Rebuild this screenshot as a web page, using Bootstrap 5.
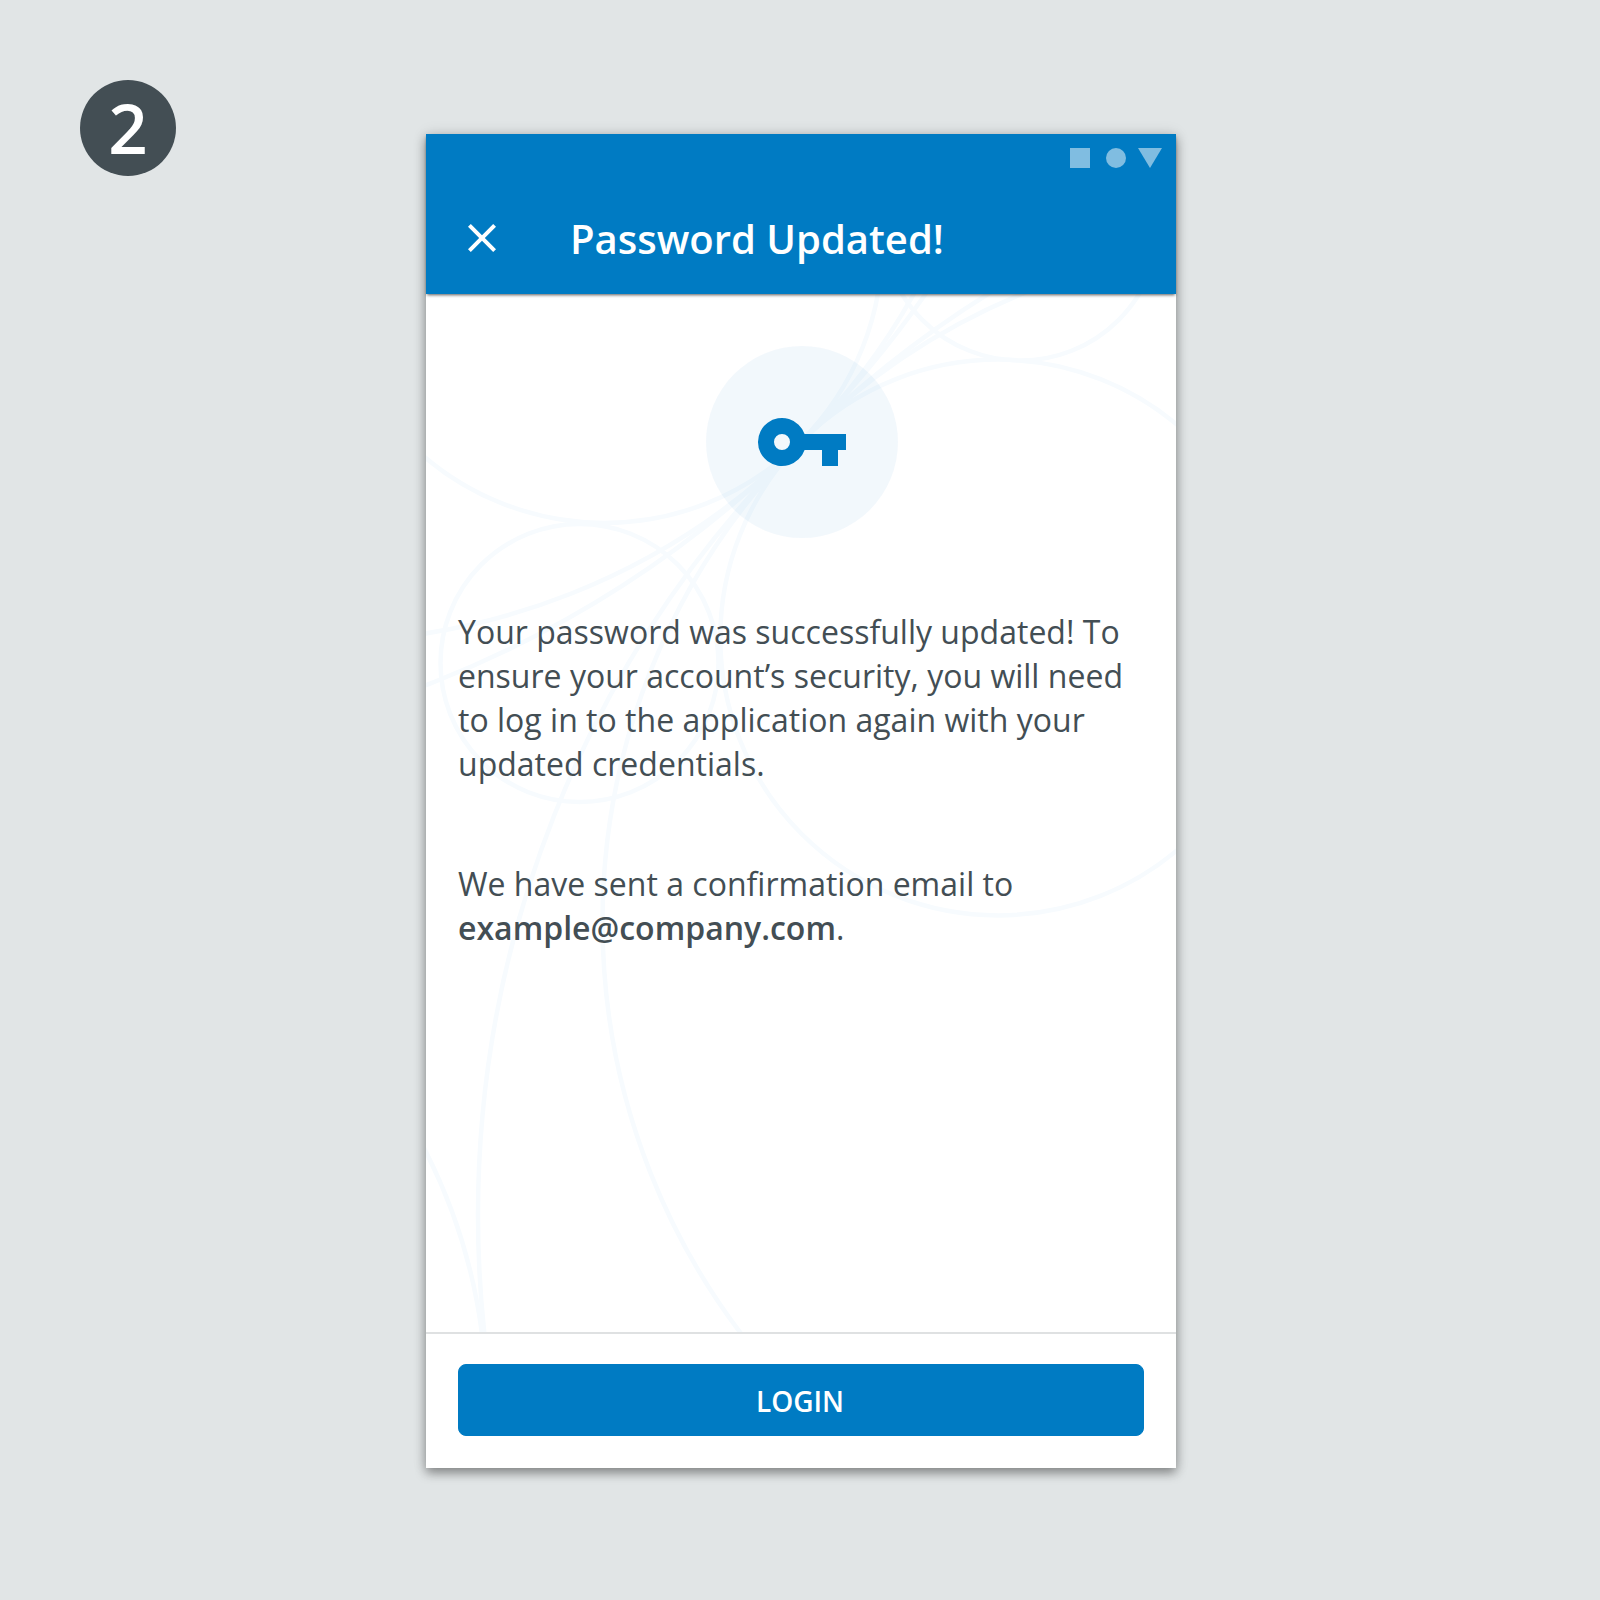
<!DOCTYPE html>
<html lang="en">
<head>
<meta charset="utf-8">
<meta name="viewport" content="width=device-width, initial-scale=1">
<title>Password Updated!</title>
<link href="https://cdn.jsdelivr.net/npm/bootstrap@5.3.0/dist/css/bootstrap.min.css" rel="stylesheet">
<style>
  body { background: #e1e5e6; color: #434e54; font-family: "Open Sans", sans-serif; font-size: 32px; line-height: 44px; }
  .stage { width: 1600px; height: 1600px; padding: 80px 0 0 80px; gap: 250px; }
  .step-badge { width: 96px; height: 96px; background: #434e54; font-size: 69px; font-weight: 600; line-height: 94px; }
  .phone { width: 750px; height: 1334px; margin-top: 54px; box-shadow: 0 5px 10px rgba(0,0,0,.38), 0 0 14px rgba(0,0,0,.12); }
  .app-header { height: 160px; background: #007bc3; z-index: 2; box-shadow: 0 2px 3px -1px rgba(0,0,0,.65); }
  .status-row { height: 48px; padding: 0 14px; }
  .title-row { height: 112px; padding: 0 32px; gap: 64px; }
  .title-row h1 { font-size: 40px; font-weight: 600; line-height: 56px; padding-top: 2px; }
  .close-btn { width: 48px; height: 48px; }
  .backdrop { inset: 0; z-index: 0; }
  .message { padding: 52px 32px 0; z-index: 1; }
  .key-disc { width: 192px; height: 192px; margin: 0 0 72px 248px; background: rgba(0,123,195,.05); }
  .message p { margin-bottom: 76px; white-space: nowrap; letter-spacing: .01px; }
  .message b { font-weight: 600; }
  .actions { height: 136px; padding: 30px 32px 32px; border-top: 2px solid #dfe1e2; }
  .btn-login { --bs-btn-bg: #007bc3; --bs-btn-border-color: #007bc3; --bs-btn-hover-bg: #006dae; height: 72px; padding: 7px 14px 5px 12px; border-radius: 8px; font-size: 28px; font-weight: 600; line-height: 36px; }
</style>
</head>
<body>
<main class="stage d-flex align-items-start overflow-hidden">
  <div class="step-badge rounded-circle text-white text-center flex-shrink-0">2</div>
  <section class="phone d-flex flex-column bg-white flex-shrink-0">
    <header class="app-header position-relative text-white">
      <div class="status-row d-flex justify-content-end align-items-center">
        <svg width="92" height="20" viewBox="0 0 92 20" fill="#fff" fill-opacity=".5" aria-hidden="true">
          <path d="M0 0h20v20H0z"/><circle cx="46" cy="10" r="10"/><path d="M68 0h24L80 20z"/>
        </svg>
      </div>
      <div class="title-row d-flex align-items-center">
        <button type="button" class="close-btn btn p-0 border-0 d-flex" aria-label="Close">
          <svg width="48" height="48" viewBox="0 0 24 24" fill="#fff"><path d="M19 6.41L17.59 5 12 10.59 6.41 5 5 6.41 10.59 12 5 17.59 6.41 19 12 13.41 17.59 19 19 17.59 13.41 12z"/></svg>
        </button>
        <h1 class="m-0">Password Updated!</h1>
      </div>
    </header>
    <div class="position-relative flex-grow-1 overflow-hidden">
      <!-- Circles share a tangent point behind the key -->
      <svg class="backdrop position-absolute" width="750" height="1038" viewBox="426 294 750 1038" fill="none" stroke="#f7fbfe" stroke-width="4.5" aria-hidden="true">
        <circle cx="604.3" cy="245" r="277.9"/>
        <circle cx="998.2" cy="637.5" r="277.9"/>
        <circle cx="320.5" cy="-38.5" r="680"/>
        <circle cx="1282.5" cy="922" r="680"/>
        <circle cx="35" cy="-328" r="1086"/>
        <circle cx="1564" cy="1215" r="1086"/>
        <circle cx="579.5" cy="663" r="139"/>
        <circle cx="1020.5" cy="221.5" r="139"/>
        <path d="M421 1142L426 1152A560 560 0 0 1 482 1334"/>
      </svg>
      <div class="message position-relative">
        <div class="key-disc rounded-circle">
          <svg class="d-block" width="192" height="192" viewBox="0 0 192 192" fill="#007bc3" aria-hidden="true">
            <path fill-rule="evenodd" d="M98.6 88H140v16h-8v16h-16v-16H98.6A24 24 0 1 1 98.6 88zM76 88a8 8 0 1 0 0 16 8 8 0 0 0 0-16z"/>
          </svg>
        </div>
        <p>Your password was successfully updated! To<br>ensure your account’s security, you will need<br>to log in to the application again with your<br>updated credentials.</p>
        <p>We have sent a confirmation email to<br><b>example@company.com</b>.</p>
      </div>
    </div>
    <footer class="actions bg-white">
      <button type="button" class="btn btn-primary btn-login w-100">LOGIN</button>
    </footer>
  </section>
</main>
<script src="https://cdn.jsdelivr.net/npm/bootstrap@5.3.0/dist/js/bootstrap.bundle.min.js"></script>
</body>
</html>
